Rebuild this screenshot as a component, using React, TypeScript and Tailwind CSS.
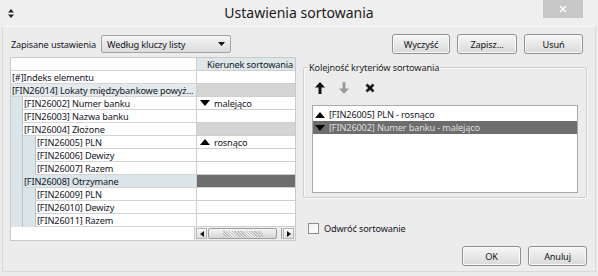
import React from 'react';

type Row = {
  label: string;
  level: number;
  group?: boolean;
  dir?: 'asc' | 'desc';
  selected?: boolean;
};

const ROWS: Row[] = [
  { label: '[#]Indeks elementu', level: 0 },
  { label: '[FIN26014] Lokaty międzybankowe powyż...', level: 0, group: true },
  { label: '[FIN26002] Numer banku', level: 1, dir: 'desc' },
  { label: '[FIN26003] Nazwa banku', level: 1 },
  { label: '[FIN26004] Złożone', level: 1, group: true },
  { label: '[FIN26005] PLN', level: 2, dir: 'asc' },
  { label: '[FIN26006] Dewizy', level: 2 },
  { label: '[FIN26007] Razem', level: 2 },
  { label: '[FIN26008] Otrzymane', level: 1, group: true, selected: true },
  { label: '[FIN26009] PLN', level: 2 },
  { label: '[FIN26010] Dewizy', level: 2 },
  { label: '[FIN26011] Razem', level: 2 },
];

function Tri({ dir, className = 'fill-black' }: { dir: 'asc' | 'desc'; className?: string }) {
  return (
    <svg width="10" height="6" viewBox="0 0 10 6" className={className}>
      {dir === 'asc' ? <polygon points="0,6 5,0 10,6" /> : <polygon points="0,0 10,0 5,6" />}
    </svg>
  );
}

function Button({ children, w }: { children: React.ReactNode; w: string }) {
  return (
    <button
      className={`${w} h-[20px] rounded-[3px] border border-[#8f8f8f] bg-gradient-to-b from-[#f6f6f6] to-[#dadada] text-[#151515] shadow-[inset_0_0_0_1px_#fbfbfb]`}
    >
      {children}
    </button>
  );
}

function TreeRow({ row }: { row: Row }) {
  const strips = Array.from({ length: row.level });
  return (
    <div className="flex h-[13px] shrink-0">
      <div className="flex w-[185px]">
        {strips.map((_, i) => (
          <div
            key={i}
            className={`${i === 0 ? 'w-[12px]' : 'w-[13px]'} shrink-0 bg-[#d9e5e8] border-r border-[#b8c4c7]`}
          />
        ))}
        <div
          className={`flex-1 min-w-0 flex items-center pl-[1px] border-b border-[#d4d4d4] whitespace-nowrap overflow-hidden ${
            row.selected ? 'bg-[#d9e5e8]' : row.group && row.level === 0 ? 'bg-[#e4eaec]' : 'bg-white'
          }`}
        >
          {row.label}
        </div>
      </div>
      <div
        className={`flex-1 flex items-center gap-[4px] pl-[3px] border-l border-b border-[#cfcfcf] whitespace-nowrap ${
          row.selected ? 'bg-[#6d6d6d]' : row.group ? 'bg-[#d4d4d4]' : 'bg-white'
        }`}
      >
        {row.dir && <Tri dir={row.dir} />}
        {row.dir === 'asc' ? 'rosnąco' : row.dir === 'desc' ? 'malejąco' : null}
      </div>
    </div>
  );
}

function ScrollBar() {
  return (
    <div className="flex-1 flex items-center gap-[1px] px-[1px] border-l border-[#cfcfcf] bg-[#ededed]">
      <div className="w-[11px] h-[11px] flex items-center justify-center border border-[#b5b5b5] bg-gradient-to-b from-[#fafafa] to-[#dedede]">
        <svg width="4" height="6" viewBox="0 0 4 6">
          <polygon points="4,0 0,3 4,6" fill="#111" />
        </svg>
      </div>
      <div className="w-[69px] h-[11px] flex items-center justify-center rounded-[2px] border border-[#9f9f9f] bg-gradient-to-b from-[#f4f4f4] to-[#d6d6d6]">
        <div className="w-[40px] h-[6px] bg-[repeating-linear-gradient(45deg,#bdbdbd_0_1px,#ececec_1px_2px)]" />
      </div>
      <div className="w-[4px] h-[11px] border-r border-[#9f9f9f]" />
      <div className="w-[11px] h-[11px] flex items-center justify-center border border-[#b5b5b5] bg-gradient-to-b from-[#fafafa] to-[#dedede]">
        <svg width="4" height="6" viewBox="0 0 4 6">
          <polygon points="0,0 4,3 0,6" fill="#111" />
        </svg>
      </div>
    </div>
  );
}

export default function App() {
  return (
    <div
      className="w-[598px] h-[276px] bg-[#ececec] text-[9.2px] tracking-[-0.15px] leading-[13px] text-[#161626] flex flex-col overflow-hidden"
      style={{ fontFamily: '"Noto Sans", "Open Sans", sans-serif' }}
    >
      {/* title bar */}
      <div className="h-[26px] shrink-0 grid grid-cols-[1fr_auto_1fr] bg-[#efefef] tracking-normal">
        <div className="flex items-center pl-[8px]">
          <svg width="6" height="9" viewBox="0 0 6 9">
            <polygon points="0,3.5 3,0 6,3.5" fill="#222" />
            <polygon points="0,5.5 6,5.5 3,9" fill="#222" />
          </svg>
        </div>
        <div className="flex items-center text-[14px] text-[#1a1a1a] pb-[1px]">Ustawienia sortowania</div>
        <div className="flex justify-end items-start pr-[15px]">
          <div className="w-[40px] h-[18px] bg-[#c7c7c7] flex items-center justify-center">
            <svg width="8" height="8" viewBox="0 0 8 8">
              <path d="M1 1 L7 7 M7 1 L1 7" stroke="#fff" strokeWidth="1.4" />
            </svg>
          </div>
        </div>
      </div>

      {/* body */}
      <div className="flex-1 mx-[2px] mb-[4px] border border-[#dadada] border-t-[#f7f7f7] pt-[7px] pl-[7px] pr-[8px]">
        {/* top row */}
        <div className="flex items-center h-[20px]">
          <span className="w-[91px] pl-[1px] whitespace-nowrap">Zapisane ustawienia</span>
          <div className="w-[130px] h-[18px] flex items-center justify-between pl-[5px] pr-[5px] rounded-[2px] border border-[#a3a3a3] bg-gradient-to-b from-[#f5f5f5] to-[#dcdcdc]">
            <span>Według kluczy listy</span>
            <svg width="7" height="4" viewBox="0 0 7 4">
              <polygon points="0,0 7,0 3.5,4" fill="#111" />
            </svg>
          </div>
          <div className="ml-auto flex gap-[7px] mr-[4px]">
            <Button w="w-[58px]">Wyczyść</Button>
            <Button w="w-[60px]">Zapisz...</Button>
            <Button w="w-[59px]">Usuń</Button>
          </div>
        </div>

        <div className="flex mt-[3px]">
          {/* tree grid */}
          <div className="w-[286px] self-start border border-[#c9c9c9] bg-white flex flex-col">
            <div className="flex h-[13px] shrink-0">
              <div className="w-[185px] border-b border-[#d4d4d4]" />
              <div className="flex-1 flex items-center justify-end pr-[2px] border-l border-b border-[#cfcfcf] bg-[#dde7ea] whitespace-nowrap">
                Kierunek sortowania
              </div>
            </div>
            {ROWS.map((r) => (
              <TreeRow key={r.label} row={r} />
            ))}
            <div className="flex h-[13px] shrink-0">
              <div className="w-[185px]" />
              <ScrollBar />
            </div>
          </div>

          {/* right column */}
          <div className="ml-[7px] flex-1 flex flex-col">
            <fieldset className="mt-[4px] h-[137px] border border-[#cfcfcf] rounded-[2px] shadow-[inset_1px_1px_0_#fafafa,1px_1px_0_#fafafa] px-[8px]">
              <legend className="px-[1px] ml-[-4px] text-[#222]">Kolejność kryteriów sortowania</legend>
              <div className="flex items-center gap-[14px] h-[26px] pl-[3px] pt-[2px]">
                <svg width="10" height="12" viewBox="0 0 10 12">
                  <polygon points="5,0 10,5.5 6.5,5.5 6.5,12 3.5,12 3.5,5.5 0,5.5" fill="#111" />
                </svg>
                <svg width="10" height="12" viewBox="0 0 10 12">
                  <polygon points="5,12 10,6.5 6.5,6.5 6.5,0 3.5,0 3.5,6.5 0,6.5" fill="#9c9c9c" />
                </svg>
                <svg width="10" height="10" viewBox="0 0 10 10" className="ml-[2px]">
                  <path d="M1.5 1.5 L8.5 8.5 M8.5 1.5 L1.5 8.5" stroke="#111" strokeWidth="2.6" />
                </svg>
              </div>
              <div className="mt-[5px] h-[88px] border border-[#a9a9a9] bg-white pt-[2px]">
                <div className="h-[13px] flex items-center gap-[4px] pl-[2px]">
                  <Tri dir="asc" />
                  <span>[FIN26005] PLN - rosnąco</span>
                </div>
                <div className="h-[13px] flex items-center gap-[4px] pl-[2px] bg-[#6d6d6d] text-[#dedede]">
                  <Tri dir="desc" />
                  <span>[FIN26002] Numer banku - malejąco</span>
                </div>
              </div>
            </fieldset>

            <label className="flex items-center gap-[5px] mt-[24px] ml-[5px] h-[12px]">
              <span className="w-[11px] h-[11px] border border-[#8e8e8e] bg-gradient-to-br from-[#f2f2f2] to-[#ffffff]" />
              <span>Odwróć sortowanie</span>
            </label>

            <div className="flex justify-end gap-[7px] mt-[12px]">
              <Button w="w-[59px]">OK</Button>
              <Button w="w-[59px]">Anuluj</Button>
            </div>
          </div>
        </div>
      </div>
    </div>
  );
}
